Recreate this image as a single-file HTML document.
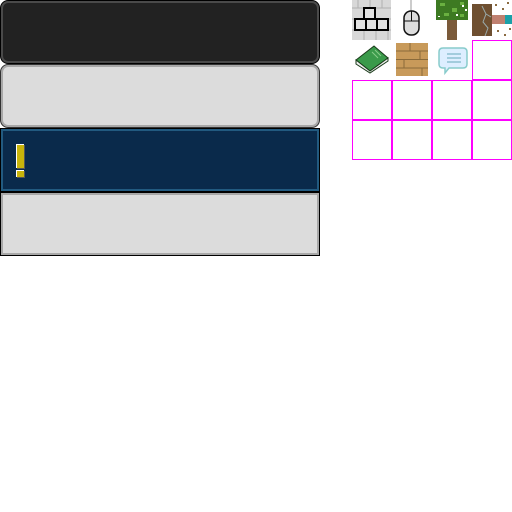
<!DOCTYPE html>
<html><head><style>
body{margin:0;width:512px;height:512px;background:#fff;position:relative;overflow:hidden}
.p{position:absolute;left:0;width:320px;height:64px;box-sizing:border-box}
.a{position:absolute}
.m{position:absolute;width:40px;height:40px;box-sizing:border-box;border:1px solid #f0f}
</style></head><body>
<div class="p" style="top:0;background:#000;border-radius:8px;padding:1px"><div style="width:100%;height:100%;box-sizing:border-box;background:#222;border:2px solid #4a4a4a;border-radius:7px"></div></div>
<div class="p" style="top:64px;background:#333;border-radius:8px;padding:1px"><div style="width:100%;height:100%;box-sizing:border-box;background:#dcdcdc;border:2px solid #a8a8a8;border-radius:7px"></div></div>
<div class="p" style="top:128px;background:#000;padding:1px"><div style="width:100%;height:100%;box-sizing:border-box;background:#0a2a4b;border:2px solid #225a80"></div></div>
<div class="a" style="left:16px;top:144px;width:8px;height:24px;background:#c8b40a;border-top:1px solid #fff;border-left:1px solid #fff;box-sizing:border-box;box-shadow:1px 1px 0 #555"></div>
<div class="a" style="left:16px;top:170px;width:8px;height:7px;background:#c8b40a;border-top:1px solid #fff;border-left:1px solid #fff;box-sizing:border-box;box-shadow:1px 1px 0 #555"></div>
<div class="p" style="top:192px;background:#000;padding:1px"><div style="width:100%;height:100%;box-sizing:border-box;background:#dcdcdc;border:2px solid #a8a8a8"></div></div>

<svg class="a" style="left:352px;top:0" width="160" height="80" viewBox="0 0 160 80">
<rect x="0" y="0" width="39" height="40" fill="#d8d8d8"/>
<g stroke="#b0b0b0" fill="none"><path d="M0 8h39M0 19h39M0 30h39M6 0v8M18 0v8M30 0v8M12 30v10M24 30v10M36 30v10"/></g>
<g fill="#e2e2e2" stroke="#000" stroke-width="2"><rect x="12" y="8" width="11" height="11"/><rect x="3" y="19" width="11" height="11"/><rect x="14" y="19" width="11" height="11"/><rect x="25" y="19" width="11" height="11"/></g>
<path d="M59 0v11" stroke="#999"/>
<rect x="52" y="11" width="15" height="24" rx="7" fill="#ddd" stroke="#111" stroke-width="1.5"/>
<path d="M52 21h15M59.5 11v10" stroke="#111"/>
<rect x="95" y="20" width="10" height="20" fill="#7a5a3a"/>
<rect x="84" y="0" width="32" height="20" fill="#3d7a22"/>
<g fill="#6ab040"><rect x="88" y="3" width="5" height="3"/><rect x="100" y="8" width="5" height="4"/><rect x="108" y="2" width="4" height="3"/><rect x="92" y="13" width="5" height="3"/><rect x="108" y="14" width="4" height="3"/></g>
<g fill="#fff"><rect x="110" y="5" width="2" height="2"/><rect x="113" y="9" width="2" height="2"/><rect x="104" y="14" width="2" height="2"/><rect x="86" y="16" width="2" height="1"/></g>
<rect x="120" y="4" width="20" height="32" fill="#6e4f30"/>
<path d="M130 6l4 8-3 8 5 6-3 8M134 14l5 3" stroke="#9aa" fill="none"/>
<rect x="140" y="15" width="13" height="9" fill="#c08070"/><rect x="153" y="15" width="7" height="9" fill="#1aa0a8"/>
<g fill="#8a6a40"><rect x="143" y="4" width="2" height="2"/><rect x="150" y="8" width="2" height="2"/><rect x="155" y="2" width="2" height="2"/><rect x="145" y="30" width="2" height="2"/><rect x="152" y="34" width="2" height="2"/><rect x="157" y="28" width="2" height="2"/></g>
<path d="M4 60l18-14 14 12-18 13z" fill="#3a9a4a" stroke="#1a3a1a"/>
<path d="M4 60v4l14 9 18-12v-3l-18 13z" fill="#eee" stroke="#1a3a1a"/>
<path d="M20 52l6 6M23 50l6 6" stroke="#8c8"/>
<rect x="44" y="43" width="32" height="33" fill="#c89a5a"/>
<path d="M44 51h32M44 59.5h32M44 68h32M58 43v8M68 51v8M52 59.5v8.5M70 68v8" stroke="#8a6a3a"/>
<path d="M91 48h20q4 0 4 4v12q0 4-4 4h-14l-4 5v-5h-2q-4 0-4-4v-12q0-4 4-4z" fill="#def" stroke="#8cc" stroke-width="1.5"/>
<path d="M95 54h14M95 58h14M95 62h14" stroke="#6ab"/>
</svg>

<div class="m" style="left:472px;top:40px"></div>
<div class="m" style="left:352px;top:80px"></div><div class="m" style="left:392px;top:80px"></div><div class="m" style="left:432px;top:80px"></div><div class="m" style="left:472px;top:80px"></div>
<div class="m" style="left:352px;top:120px"></div><div class="m" style="left:392px;top:120px"></div><div class="m" style="left:432px;top:120px"></div><div class="m" style="left:472px;top:120px"></div>
</body></html>
